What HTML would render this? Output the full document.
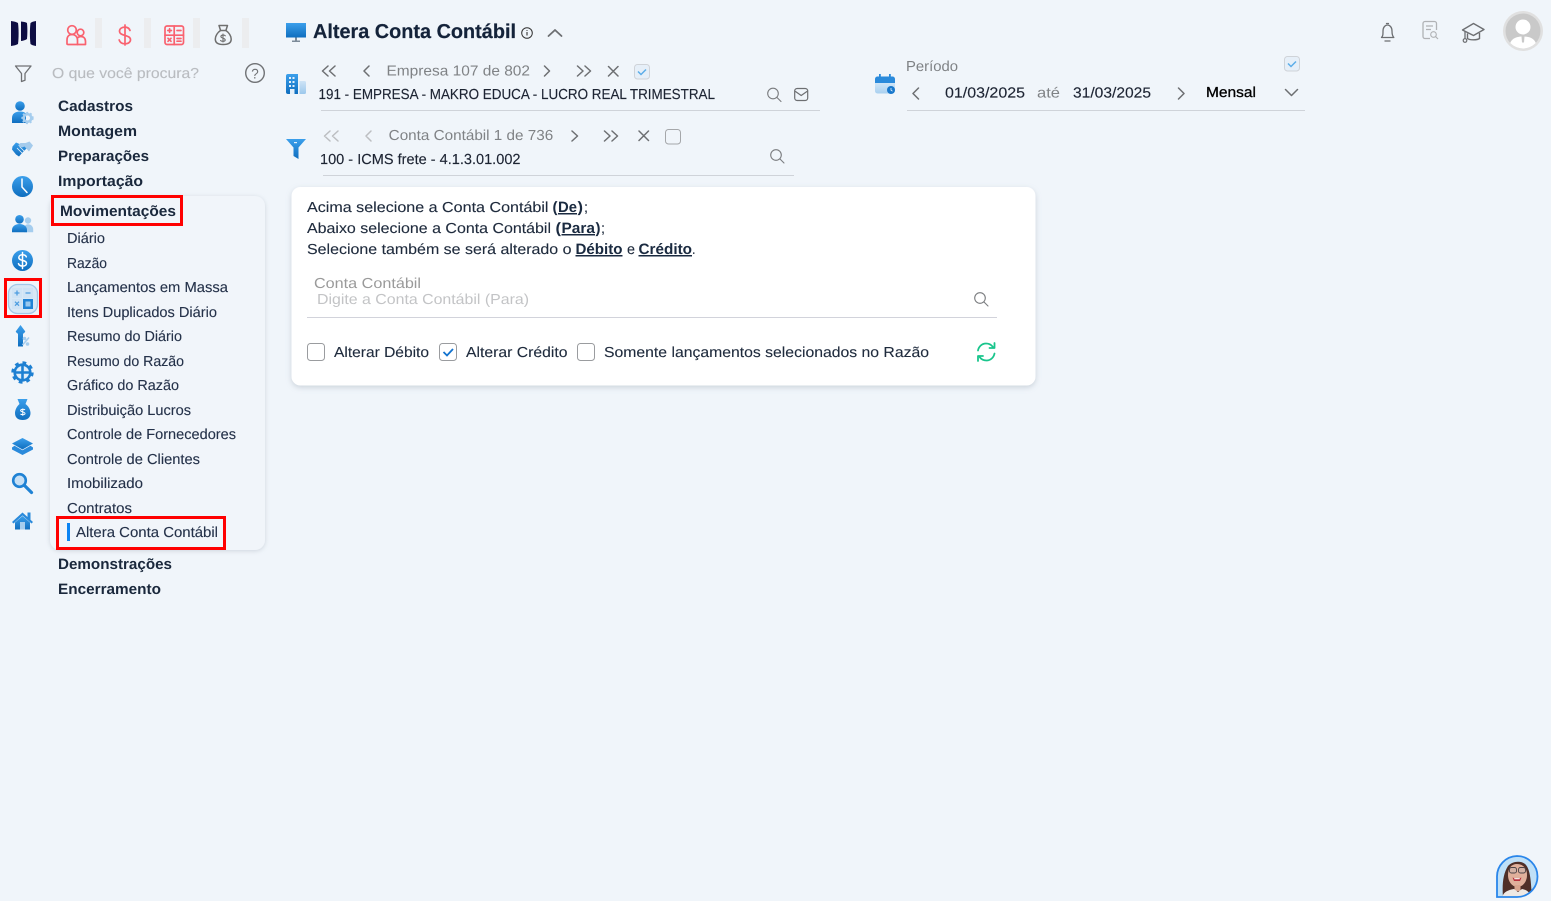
<!DOCTYPE html>
<html lang="pt-BR">
<head>
<meta charset="utf-8">
<title>Altera Conta Contábil</title>
<style>
html,body{margin:0;padding:0;width:1551px;height:901px;overflow:hidden;background:#f0f5fa}
svg{display:block}
text{font-family:"Liberation Sans",sans-serif;white-space:pre;text-rendering:geometricPrecision}
.b{font-weight:700;font-size:15px;fill:#1a283c}
.s{font-size:14.5px;fill:#25324a;stroke:#25324a;stroke-width:.12}
.c{font-size:14.5px;fill:#1f2b3d;stroke:#1f2b3d;stroke-width:.12}
.cb{font-size:15px;font-weight:700;fill:#1a2a40}
.g{font-size:14.500px;fill:#7f8285}
.v{font-size:14.5px;fill:#1d2433;stroke:#1d2433;stroke-width:.15}
.u{text-decoration:underline}
.ln{fill:none;stroke:#6d6f72;stroke-width:1.5;stroke-linecap:round;stroke-linejoin:round}
.p{fill:none;stroke:#f9626f;stroke-width:1.7;stroke-linecap:round;stroke-linejoin:round}
</style>
</head>
<body>
<svg width="1551" height="901" viewBox="0 0 1551 901" xmlns="http://www.w3.org/2000/svg">
<defs>
<linearGradient id="bl" x1="0" y1="0" x2="0" y2="1"><stop offset="0" stop-color="#3b9feb"/><stop offset="1" stop-color="#0f6ebf"/></linearGradient>
<linearGradient id="lt" x1="0" y1="0" x2="0" y2="1"><stop offset="0" stop-color="#cfe4f6"/><stop offset="1" stop-color="#9cc8ec"/></linearGradient>
<linearGradient id="cal" x1="0" y1="0" x2="0" y2="1"><stop offset="0" stop-color="#e4f0fa"/><stop offset="1" stop-color="#a9d0f0"/></linearGradient>
<filter id="sh" x="-5%" y="-10%" width="110%" height="125%"><feDropShadow dx="0" dy="2" stdDeviation="3" flood-color="#8d99a8" flood-opacity=".38"/></filter>
<filter id="sh2" x="-5%" y="-5%" width="110%" height="110%"><feDropShadow dx="0" dy="1" stdDeviation="2.5" flood-color="#9aa5b3" flood-opacity=".4"/></filter>
<clipPath id="tear"><path d="M1517 856a20 20 0 0 1 0 41h-20v-20a20.500 20.500 0 0 1 20-21z"/></clipPath>
<clipPath id="av"><circle cx="1523" cy="31" r="17.500"/></clipPath>
</defs>

<rect width="1551" height="901" fill="#f0f5fa"/>

<!-- logo -->
<path d="M11 21c3 .4 5.500 1 7 2 .8 6 .8 15 0 21-1.500 1-4 1.600-7 2z" fill="#0d0d42"/>
<path d="M21 21.500c2.500.2 4.500.6 6 1.500.5 5 .5 11 0 16-1.500 1-3.500 1.700-6 2z" fill="#0d0d42"/>
<path d="M36 21c-2.500.4-4.500 1-5.500 2-.8 6-.8 15 0 21 1 1 3 1.600 5.500 2z" fill="#0d0d42"/>

<!-- top module separators -->
<rect x="95" y="18" width="7" height="30" fill="#ecedef"/>
<rect x="144" y="18" width="7" height="30" fill="#ecedef"/>
<rect x="193" y="18" width="7" height="30" fill="#ecedef"/>
<rect x="242" y="18" width="7" height="30" fill="#ecedef"/>

<!-- people -->
<g class="p"><circle cx="72" cy="30" r="4.300"/><circle cx="80.500" cy="32.500" r="3.300"/><path d="M67 44v-4c0-3.500 2-5.500 5-5.500s5.500 2 5.500 5.500v4.500h-9.500a1.500 1.500 0 0 1-1-.5z"/><path d="M78 37.500c1-.7 1.800-1 2.700-1 3 0 4.800 2 4.800 5v3h-8"/></g>
<!-- dollar -->
<path class="p" d="M130 30.500c-.8-2.300-2.800-3.400-5.300-3.400-3 0-5.200 1.700-5.200 4 0 5.500 11 3.200 11 8.700 0 2.500-2.500 4-5.500 4-3 0-5.100-1.400-5.800-3.800M125 25v20"/>
<!-- calculator -->
<g class="p"><rect x="165" y="26" width="18.500" height="18.500" rx="2"/><path d="M165 35.200h18.500M174.200 26v18.500M167.800 30.500h3.600M169.600 28.700v3.600M177 30.500h4M168 38.300l3 3M171 38.300l-3 3M177 38.500h4M177 41.200h4"/></g>
<!-- money bag -->
<g fill="none" stroke="#6f6f6f" stroke-width="1.500" stroke-linejoin="round" stroke-linecap="round"><path d="M219 25.500h8.500l-1.600 5h-5.300z"/><path d="M220.500 30.500c-3 2-5.200 5.500-5.200 8.600 0 3.800 3 5.400 7.900 5.400s8-1.600 8-5.400c0-3.100-2.300-6.600-5.300-8.600"/><path d="M225.300 35.800c-.6-.9-3.900-1.200-4.400.5-.5 2.300 4.600 1.500 4.300 3.800-.3 1.600-3.800 1.500-4.600.4M223 34v8" stroke-width="1.100"/></g>

<!-- search row -->
<path d="M15.500 66h15.500l-6 7.500v6.800l-3.500 1.200v-8z" fill="none" stroke="#6f7174" stroke-width="1.300" stroke-linejoin="round"/>
<text x="52" y="78" font-size="14.500" fill="#b9bcc0" stroke="#b9bcc0" stroke-width=".12" textLength="147" lengthAdjust="spacingAndGlyphs">O que você procura?</text>
<circle cx="255" cy="73" r="9.300" fill="none" stroke="#707275" stroke-width="1.400"/>
<text x="251.300" y="78.300" font-size="14" fill="#707275" textLength="7.500" lengthAdjust="spacingAndGlyphs">?</text>

<!-- left rail icons -->
<!-- user gear -->
<circle cx="20" cy="106" r="4.800" fill="url(#bl)"/>
<path d="M12 123v-5c0-4 3-6.500 8-6.500 2.500 0 4 .5 6 1.800v9.700z" fill="url(#bl)"/>
<circle cx="27.500" cy="118" r="3.800" fill="none" stroke="#a5cdee" stroke-width="2.600"/>
<circle cx="27.500" cy="118" r="5.400" fill="none" stroke="#a5cdee" stroke-width="1.500" stroke-dasharray="2 2"/>
<!-- handshake -->
<path d="M12.500 146.500l3.500-4 6 2.500 3 -1 3 3-6 6-3 3.500-3-2-4-5z" fill="url(#bl)"/>
<path d="M33 145.500l-3.500-4-4 1.500-5 0-2.500 2.500 4 2 2.500-1 4.500 5z" fill="#a4cbec"/>
<path d="M17 148l5 5M19.500 146.500l5 5" stroke="#f0f5fa" stroke-width=".8" fill="none"/>
<!-- clock -->
<circle cx="22.500" cy="186.500" r="10.500" fill="url(#bl)"/>
<path d="M22 179v8l5 5.500" fill="none" stroke="#fff" stroke-width="1.500" stroke-linecap="round" stroke-linejoin="round"/>
<!-- users -->
<circle cx="28" cy="220.500" r="3.200" fill="#a5cdee"/>
<path d="M24 232.300v-3c0-3 1.500-5 4-5s5.200 2 5.200 5v3z" fill="#a5cdee"/>
<circle cx="19.500" cy="219.300" r="4.300" fill="url(#bl)"/>
<path d="M12 232.300v-2.300c0-3.500 3-6 7.500-6s7.500 2.500 7.500 6v2.300z" fill="url(#bl)"/>
<!-- dollar circle -->
<circle cx="22.500" cy="260.500" r="10.500" fill="url(#bl)"/>
<path d="M26.300 256.800c-.6-1.400-2-2-3.800-2-2.200 0-3.700 1.100-3.700 2.700 0 3.700 7.700 2.100 7.700 5.900 0 1.700-1.700 2.700-3.900 2.700-2 0-3.500-.8-4.100-2.400M22.500 252.500v16" fill="none" stroke="#fff" stroke-width="1.500" stroke-linecap="round"/>

<!-- arrow percent -->
<path d="M20.500 325l4.800 6.500c-.6 1-1.400 1.800-2.300 2.200v12.800h-5v-12.800c-.9-.4-1.700-1.200-2.300-2.200z" fill="url(#bl)"/>
<path d="M22.500 345l6.500-7.500" stroke="#a5cdee" stroke-width="1.600"/>
<circle cx="24.500" cy="338.500" r="1.800" fill="#a5cdee"/><circle cx="27.500" cy="344" r="1.800" fill="#a5cdee"/>
<!-- gear plus -->
<circle cx="22.500" cy="372.500" r="7.800" fill="#e1eefa" stroke="#1e80d2" stroke-width="2.600"/>
<circle cx="22.500" cy="372.500" r="10" fill="none" stroke="#1e80d2" stroke-width="2.400" stroke-dasharray="3.800 4"/>
<path d="M22.500 365v15M15 372.500h15" stroke="#1e80d2" stroke-width="2.600"/>
<!-- bag -->
<path d="M17.500 399h10l-2 5c3 2 5 6 5 9 0 5-3.500 7-7.800 7s-7.700-2-7.700-7c0-3 2-7 4.500-9z" fill="url(#bl)"/>
<path d="M25 410c-.5-.9-3.700-1.100-4.400.3-.4 2 4.700 1.300 4.400 3.400-.3 1.300-3.500 1.300-4.500.3M22.800 408.500v7.300" fill="none" stroke="#fff" stroke-width="1"/>
<!-- layers -->
<path d="M22.500 438l10.500 5.500-10.500 6-10.500-6z" fill="url(#bl)"/>
<path d="M12 447.500l2.500-1.800 8 4.500 8-4.500 2.500 1.800v2l-10.500 5.500-10.500-5.500z" fill="#2a8adb"/>
<!-- search -->
<circle cx="19.500" cy="480.500" r="6.300" fill="#c7e0f5" stroke="#1f82d4" stroke-width="2.600"/>
<path d="M24.500 485.500l7 7" stroke="#1f82d4" stroke-width="3.200" stroke-linecap="round"/>
<!-- home -->
<path d="M12 522l10.500-9.500 5 4.500v-4.500h3v7.300l2.500 2.200-1.500 1.500-9-8-9 8z" fill="#2a8adb"/>
<path d="M15 522.500l7.500-6.500 7.500 6.500v7h-15z" fill="url(#bl)"/>
<rect x="20" y="522" width="5" height="7.500" fill="#a5cdee"/>

<!-- submenu panel -->
<rect x="50" y="196" width="215" height="354" rx="10" fill="#f1f5fa" filter="url(#sh2)"/>

<!-- sidebar menu -->
<text class="b" x="58" y="111" textLength="75" lengthAdjust="spacingAndGlyphs">Cadastros</text>
<text class="b" x="58" y="136" textLength="79" lengthAdjust="spacingAndGlyphs">Montagem</text>
<text class="b" x="58" y="161" textLength="91" lengthAdjust="spacingAndGlyphs">Preparações</text>
<text class="b" x="58" y="186" textLength="85" lengthAdjust="spacingAndGlyphs">Importação</text>
<text class="b" x="60" y="216" textLength="116" lengthAdjust="spacingAndGlyphs">Movimentações</text>
<text class="s" x="67" y="243" textLength="38" lengthAdjust="spacingAndGlyphs">Diário</text>
<text class="s" x="67" y="268" textLength="40" lengthAdjust="spacingAndGlyphs">Razão</text>
<text class="s" x="67" y="292" textLength="161" lengthAdjust="spacingAndGlyphs">Lançamentos em Massa</text>
<text class="s" x="67" y="317" textLength="150" lengthAdjust="spacingAndGlyphs">Itens Duplicados Diário</text>
<text class="s" x="67" y="341" textLength="115" lengthAdjust="spacingAndGlyphs">Resumo do Diário</text>
<text class="s" x="67" y="366" textLength="117" lengthAdjust="spacingAndGlyphs">Resumo do Razão</text>
<text class="s" x="67" y="390" textLength="112" lengthAdjust="spacingAndGlyphs">Gráfico do Razão</text>
<text class="s" x="67" y="415" textLength="124" lengthAdjust="spacingAndGlyphs">Distribuição Lucros</text>
<text class="s" x="67" y="439" textLength="169" lengthAdjust="spacingAndGlyphs">Controle de Fornecedores</text>
<text class="s" x="67" y="464" textLength="133" lengthAdjust="spacingAndGlyphs">Controle de Clientes</text>
<text class="s" x="67" y="488" textLength="76" lengthAdjust="spacingAndGlyphs">Imobilizado</text>
<text class="s" x="67" y="513" textLength="65" lengthAdjust="spacingAndGlyphs">Contratos</text>
<rect x="67" y="523" width="3" height="18" fill="#0b84f3"/>
<text class="s" x="76" y="537" textLength="142" lengthAdjust="spacingAndGlyphs">Altera Conta Contábil</text>
<text class="b" x="58" y="569" textLength="114" lengthAdjust="spacingAndGlyphs">Demonstrações</text>
<text class="b" x="58" y="594" textLength="103" lengthAdjust="spacingAndGlyphs">Encerramento</text>

<!-- calculator active -->
<rect x="8.500" y="284.500" width="29" height="29" rx="9" fill="#d8e8f6" stroke="#a3c7e8" stroke-width="1.300"/>
<rect x="12" y="288" width="10" height="10" fill="#cfe3f5"/>
<rect x="23" y="288" width="10" height="10" fill="#cfe3f5"/>
<rect x="12" y="299" width="10" height="10" fill="#cfe3f5"/>
<rect x="23" y="299" width="10" height="10" fill="#2183d6"/>
<path d="M14.500 293h5M17 290.500v5M25.500 293h5M15 301.700l4 4M19 301.700l-4 4" stroke="#4d9de0" stroke-width="1.300" fill="none"/>
<rect x="25.500" y="301.500" width="5" height="5" fill="#9ac8ee"/>

<!-- red boxes -->
<rect x="52.500" y="196.500" width="129" height="28" fill="none" stroke="#f00" stroke-width="3"/>
<rect x="5.500" y="279.500" width="35" height="37" fill="none" stroke="#f00" stroke-width="3"/>
<rect x="57.500" y="517.500" width="167" height="31" fill="none" stroke="#f00" stroke-width="3"/>

<!-- header -->
<rect x="286" y="23" width="20" height="14.500" fill="url(#bl)"/>
<path d="M295 37.500h2v3h3v1.500h-8v-1.500h3z" fill="#7d8b99"/>
<text x="313" y="38" font-size="20" font-weight="700" fill="#14233a" stroke="#14233a" stroke-width=".2" textLength="203" lengthAdjust="spacingAndGlyphs">Altera Conta Contábil</text>
<circle cx="527" cy="33" r="5.300" fill="none" stroke="#333" stroke-width="1"/>
<path d="M527 32v3.500M527 30v.9" stroke="#333" stroke-width="1.100"/>
<path d="M548.500 36l6.500-6 6.500 6" class="ln" style="stroke-width:1.800"/>

<!-- empresa row -->
<path d="M286 76a2 2 0 0 1 2-2h10v20h-10a2 2 0 0 1-2-2z" fill="url(#bl)"/>
<path d="M299.500 81h5a1.500 1.500 0 0 1 1.500 1.500v10a1.500 1.500 0 0 1-1.500 1.500h-5z" fill="url(#lt)"/>
<path d="M289 77h2v2h-2zM292.500 77h2v2h-2zM289 81h2v2h-2zM292.500 81h2v2h-2zM289 85h2v2h-2zM292.500 85h2v2h-2z" fill="#e4f0fa"/>
<rect x="290" y="89" width="4.500" height="5" fill="#e4f0fa"/>
<path d="M328 66l-5.500 5 5.500 5M335 66l-5.500 5 5.500 5M369 66l-5 5 5 5M544.500 66l5 5-5 5M577.500 66l5.500 5-5.500 5M585 66l5.500 5-5.500 5M608.500 66.500l9.500 9.500M618 66.500l-9.500 9.500" class="ln"/>
<text class="g" x="386.500" y="75.500" textLength="143.500" lengthAdjust="spacingAndGlyphs">Empresa 107 de 802</text>
<rect x="634.500" y="64.500" width="15" height="14.500" rx="3" fill="#e6eff8" stroke="#cfd3d8"/>
<path d="M638 71.500l3 3 5-5" fill="none" stroke="#5cade8" stroke-width="1.500"/>
<text class="v" x="318.500" y="99" textLength="396.500" lengthAdjust="spacingAndGlyphs">191 - EMPRESA - MAKRO EDUCA - LUCRO REAL TRIMESTRAL</text>
<circle cx="773" cy="93.500" r="5.300" class="ln" style="stroke-width:1.100;stroke:#7a7c7f"/>
<path d="M777 97.500l4 4" class="ln" style="stroke-width:1.100;stroke:#7a7c7f"/>
<rect x="794.700" y="88.500" width="13" height="12" rx="2.500" class="ln" style="stroke-width:1.200"/>
<path d="M795.500 91.500l5.700 4 5.700-4" class="ln" style="stroke-width:1.200"/>
<rect x="321" y="110" width="499" height="1" fill="#cfd3d9"/>

<!-- conta row -->
<path d="M286 139h20l-7.500 8.500v11.500l-5-3v-8.500z" fill="url(#bl)"/>
<rect x="294" y="142" width="3" height="1.200" fill="#e4f0fa"/>
<path d="M330 131l-5.500 5 5.500 5M338 131l-5.500 5 5.500 5M371 131l-5 5 5 5" fill="none" stroke="#bcbec1" stroke-width="1.500" stroke-linecap="round" stroke-linejoin="round"/>
<text class="g" x="388.700" y="140" textLength="164.500" lengthAdjust="spacingAndGlyphs">Conta Contábil 1 de 736</text>
<path d="M572 131l5.500 5-5.500 5M604.500 131l5.500 5-5.500 5M612 131l5.500 5-5.500 5M639 131l9.500 9.500M648.500 131l-9.500 9.500" class="ln"/>
<rect x="665.500" y="129.500" width="15" height="14.500" rx="3" fill="none" stroke="#a5a7aa" stroke-width="1"/>
<text class="v" x="320" y="164" textLength="200.500" lengthAdjust="spacingAndGlyphs">100 - ICMS frete - 4.1.3.01.002</text>
<circle cx="776" cy="155" r="5.300" class="ln" style="stroke-width:1.100;stroke:#7a7c7f"/>
<path d="M780 159l4 4" class="ln" style="stroke-width:1.100;stroke:#7a7c7f"/>
<rect x="323" y="175" width="471" height="1" fill="#cfd3d9"/>

<!-- periodo -->
<rect x="875" y="77" width="20" height="16.500" rx="2.500" fill="url(#cal)"/>
<path d="M875 83v-4a2.500 2.500 0 0 1 2.500-2.500h15a2.500 2.500 0 0 1 2.500 2.500v4z" fill="#2a8adb"/>
<rect x="879" y="74" width="1.800" height="4.500" fill="#2a8adb"/><rect x="889" y="74" width="1.800" height="4.500" fill="#2a8adb"/>
<circle cx="891" cy="90" r="4" fill="#1878cc"/><path d="M891 88v2.200l1.500 1" stroke="#fff" stroke-width=".7" fill="none"/>
<text class="g" x="906" y="71" textLength="52" lengthAdjust="spacingAndGlyphs">Período</text>
<rect x="1284.500" y="56.500" width="15" height="14.500" rx="3" fill="#e6eff8" stroke="#cfd3d8"/>
<path d="M1288 63.500l3 3 5-5" fill="none" stroke="#5cade8" stroke-width="1.500"/>
<path d="M918.500 88l-5.500 5.500 5.500 5.500M1178.500 88l5.500 5.500-5.500 5.500M1285.500 89.500l6 6 6-6" class="ln"/>
<text class="v" x="945" y="97.500" textLength="80" lengthAdjust="spacingAndGlyphs">01/03/2025</text>
<text class="g" x="1037" y="97.500" textLength="23" lengthAdjust="spacingAndGlyphs">até</text>
<text class="v" x="1073" y="97.500" textLength="78" lengthAdjust="spacingAndGlyphs">31/03/2025</text>
<text x="1206" y="97" font-size="14.500" fill="#000" stroke="#000" stroke-width=".3" textLength="50" lengthAdjust="spacingAndGlyphs">Mensal</text>
<rect x="907" y="110" width="398" height="1" fill="#cfd3d9"/>

<!-- top right -->
<path d="M1381.500 37.500c1.500-1.500 1.500-3 1.500-6.500 0-3.500 2-6 4.500-6s4.500 2.500 4.500 6c0 3.500.3 5 1.800 6.500z" class="ln" style="stroke-width:1.300"/>
<path d="M1386.500 23.500h2M1385 41h5" class="ln" style="stroke-width:1.300"/>
<path d="M1436.500 30v-6.500a2 2 0 0 0-2-2h-9.500a2 2 0 0 0-2 2v13a2 2 0 0 0 2 2h5" fill="none" stroke="#b0b2b5" stroke-width="1.300"/>
<path d="M1426 26h7M1426 29.500h5" stroke="#b0b2b5" stroke-width="1.200"/>
<circle cx="1433.500" cy="34.500" r="2.800" fill="none" stroke="#b0b2b5" stroke-width="1.100"/><path d="M1435.500 36.500l2.500 2.500" stroke="#b0b2b5" stroke-width="1.200"/>
<path d="M1462.500 30l11-6.500 10.500 6-10.500 6z" fill="none" stroke="#6d6f72" stroke-width="1.400" stroke-linejoin="round"/>
<path d="M1467.500 33.500v5c2 1.800 9.500 1.800 12 0v-5.500" fill="none" stroke="#6d6f72" stroke-width="1.400"/>
<path d="M1465 31v8" stroke="#6d6f72" stroke-width="1.300"/><circle cx="1465" cy="40.500" r="1.800" fill="none" stroke="#6d6f72" stroke-width="1.200"/>
<circle cx="1523" cy="31" r="20" fill="#e0e0e0"/>
<circle cx="1523" cy="31" r="17.500" fill="#c9c9c9"/>
<g clip-path="url(#av)"><circle cx="1523" cy="27" r="7.500" fill="#fff"/><path d="M1509 50c0-10 5-13.500 14-13.500s14 3.500 14 13.500z" fill="#fff"/><path d="M1521.500 36.500h3l-.5 6h-2z" fill="#c9c9c9"/></g>

<!-- card -->
<rect x="291.500" y="187" width="744" height="198.500" rx="9" fill="#fff" filter="url(#sh)"/>
<text class="c" x="307" y="212" textLength="241.500" lengthAdjust="spacingAndGlyphs">Acima selecione a Conta Contábil</text>
<text class="cb" x="552.500" y="212" textLength="5" lengthAdjust="spacingAndGlyphs">(</text>
<text class="cb u" x="558" y="212" textLength="19" lengthAdjust="spacingAndGlyphs">De</text>
<text class="cb" x="577.500" y="212" textLength="5.500" lengthAdjust="spacingAndGlyphs">)</text>
<text class="c" x="584" y="212" textLength="4" lengthAdjust="spacingAndGlyphs">;</text>
<text class="c" x="307" y="233" textLength="244" lengthAdjust="spacingAndGlyphs">Abaixo selecione a Conta Contábil</text>
<text class="cb" x="555.500" y="233" textLength="5.500" lengthAdjust="spacingAndGlyphs">(</text>
<text class="cb u" x="561.500" y="233" textLength="33.500" lengthAdjust="spacingAndGlyphs">Para</text>
<text class="cb" x="595.500" y="233" textLength="5" lengthAdjust="spacingAndGlyphs">)</text>
<text class="c" x="601" y="233" textLength="4" lengthAdjust="spacingAndGlyphs">;</text>
<text class="c" x="307" y="254" textLength="264.500" lengthAdjust="spacingAndGlyphs">Selecione também se será alterado o</text>
<text class="cb u" x="575.500" y="254" textLength="47" lengthAdjust="spacingAndGlyphs">Débito</text>
<text class="c" x="627" y="254" textLength="8" lengthAdjust="spacingAndGlyphs">e</text>
<text class="cb u" x="638.500" y="254" textLength="53.500" lengthAdjust="spacingAndGlyphs">Crédito</text>
<text class="c" x="692" y="254" textLength="3.500" lengthAdjust="spacingAndGlyphs">.</text>

<text x="314" y="288" font-size="14.500" fill="#9a9a9a" textLength="107" lengthAdjust="spacingAndGlyphs">Conta Contábil</text>
<text x="317" y="304" font-size="14.500" fill="#c3c4c6" textLength="212" lengthAdjust="spacingAndGlyphs">Digite a Conta Contábil (Para)</text>
<circle cx="980" cy="298" r="5.300" class="ln" style="stroke-width:1.100;stroke:#7a7c7f"/>
<path d="M984 302l4 4" class="ln" style="stroke-width:1.100;stroke:#7a7c7f"/>
<rect x="307" y="317" width="690" height="1" fill="#d2d3db"/>

<rect x="307.500" y="343.500" width="17" height="17" rx="3" fill="#fff" stroke="#9a9c9f"/>
<text class="c" x="334" y="357" textLength="95" lengthAdjust="spacingAndGlyphs">Alterar Débito</text>
<rect x="439.500" y="343.500" width="17" height="17" rx="3" fill="#fff" stroke="#9a9c9f"/>
<path d="M443.500 352l3.500 3.500 6-6.500" fill="none" stroke="#1273cf" stroke-width="1.800"/>
<text class="c" x="466" y="357" textLength="101.500" lengthAdjust="spacingAndGlyphs">Alterar Crédito</text>
<rect x="577.500" y="343.500" width="17" height="17" rx="3" fill="#fff" stroke="#9a9c9f"/>
<text class="c" x="604" y="357" textLength="325" lengthAdjust="spacingAndGlyphs">Somente lançamentos selecionados no Razão</text>

<path d="M978 350.500c.7-4 4-7 8-7 2.800 0 5.200 1.200 6.800 3.300M994.500 353.500c-.7 4-4 7-8 7-2.800 0-5.200-1.200-6.800-3.300" fill="none" stroke="#19c58c" stroke-width="1.800" stroke-linecap="round"/>
<path d="M994.500 343v5h-5M978 361v-5h5" fill="none" stroke="#19c58c" stroke-width="1.800" stroke-linecap="round" stroke-linejoin="round"/>

<!-- assistant avatar -->
<path d="M1517 856a20 20 0 0 1 0 41h-20v-20a20.500 20.500 0 0 1 20-21z" fill="#bfe0f7"/>
<g clip-path="url(#tear)">
<path d="M1503 898c-1-14 0-24 5-32 4-5 14-6 18-1 5 6 5 20 6 33z" fill="#4f2f28"/>
<path d="M1508 875c0-7 3.500-11 9-11s10 4 10 11c0 7-4.500 12-9.500 12s-9.500-5-9.500-12z" fill="#e0b09b"/>
<rect x="1514.500" y="885" width="6" height="6" fill="#d9a58f"/>
<path d="M1502 898c1-6 6-8 12-9l4 3 4-3c5 1 8 3 9 9z" fill="#efe9e4"/>
<rect x="1509.500" y="867.500" width="7" height="5.500" rx="2" fill="#c9b4ac" fill-opacity=".6" stroke="#4b4245" stroke-width=".9"/>
<rect x="1518.500" y="867.500" width="7" height="5.500" rx="2" fill="#c9b4ac" fill-opacity=".6" stroke="#4b4245" stroke-width=".9"/>
<path d="M1512.500 877.500c3 1.200 6 1.200 9 0l-1.500 3.500h-6z" fill="#b9303c"/>
<path d="M1514 878.200h6l-.4 1h-5.200z" fill="#fff"/>
</g>
<path d="M1517 856a20 20 0 0 1 0 41h-20v-20a20.500 20.500 0 0 1 20-21z" fill="none" stroke="#2a86ea" stroke-width="1.800"/>
</svg>
</body>
</html>
